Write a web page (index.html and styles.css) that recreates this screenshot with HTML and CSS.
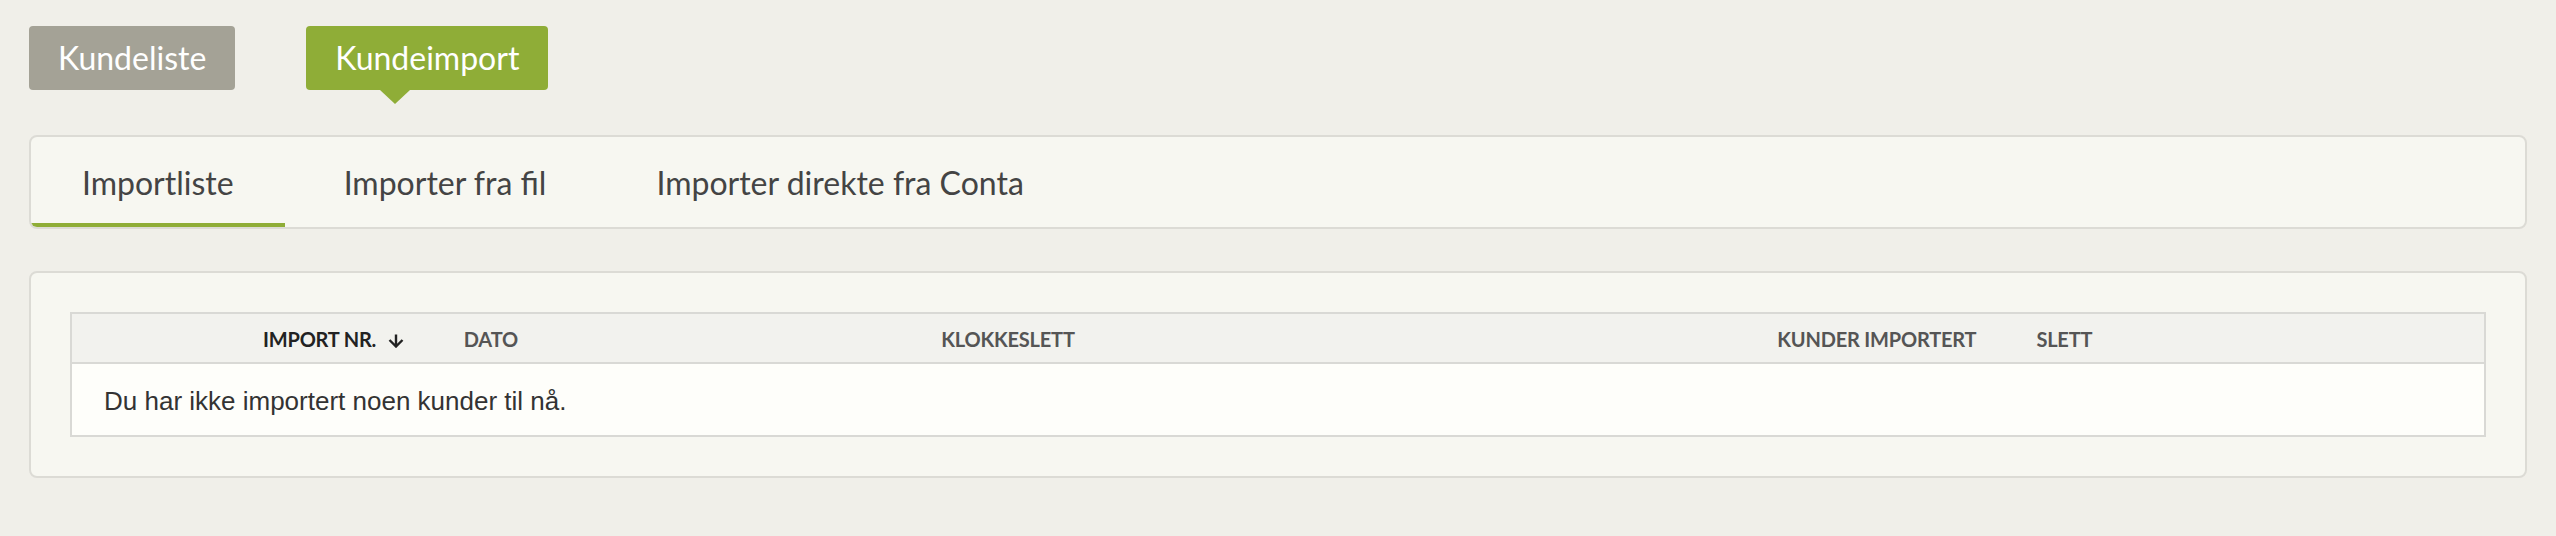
FILE: index.html
```html
<!DOCTYPE html>
<html lang="no">
<head>
    <meta charset="UTF-8">
    <meta name="viewport" content="width=device-width, initial-scale=1.0">
    <title>Kundeimport</title>
    <link rel="stylesheet" href="styles.css">
</head>
<body>
    <div class="page">
        <nav class="main-nav">
            <a class="nav-btn" href="#">Kundeliste</a>
            <a class="nav-btn active" href="#">Kundeimport</a>
        </nav>

        <div class="card tabs">
            <a class="tab active" href="#">Importliste</a>
            <a class="tab" href="#">Importer fra fil</a>
            <a class="tab" href="#">Importer direkte fra Conta</a>
        </div>

        <div class="card list-card">
            <table class="import-table">
                <colgroup>
                    <col class="col-nr">
                    <col class="col-date">
                    <col class="col-time">
                    <col class="col-count">
                    <col class="col-delete">
                </colgroup>
                <thead>
                    <tr>
                        <th class="num sorted">
                            Import nr.
                            <svg class="sort-icon" width="16" height="14" viewBox="0 0 16 14">
                                <path d="M8 0.5 V12.5 M1.5 6 L8 12.5 L14.5 6" fill="none" stroke="currentColor" stroke-width="2.4"/>
                            </svg>
                        </th>
                        <th>Dato</th>
                        <th>Klokkeslett</th>
                        <th class="num">Kunder importert</th>
                        <th>Slett</th>
                    </tr>
                </thead>
                <tbody>
                    <tr>
                        <td colspan="5" class="empty">Du har ikke importert noen kunder til nå.</td>
                    </tr>
                </tbody>
            </table>
        </div>
    </div>
</body>
</html>
```

FILE: styles.css
```css
* {
    margin: 0;
    padding: 0;
    box-sizing: border-box;
}

body {
    background: #f0efe9;
    font-family: Lato, "Open Sans", sans-serif;
    color: #444;
}

a {
    text-decoration: none;
}

.page {
    padding: 26px 29px;
}

/* top buttons */
.main-nav {
    display: flex;
    gap: 71px;
    margin-bottom: 45px;
}

.nav-btn {
    position: relative;
    height: 64px;
    padding: 0 29px;
    line-height: 64px;
    font-size: 32px;
    color: #fff;
    background: #a4a296;
    border-radius: 4px;
}

.nav-btn.active {
    background: #8fad37;
}

.nav-btn.active::after {
    content: "";
    position: absolute;
    top: 100%;
    left: 74px;
    border-left: 15px solid transparent;
    border-right: 15px solid transparent;
    border-top: 14px solid #8fad37;
}

/* cards */
.card {
    background: #f7f7f1;
    border: 2px solid #dcdbd5;
    border-radius: 8px;
}

.tabs {
    display: flex;
    gap: 8px;
    overflow: hidden;
}

.tab {
    display: flex;
    align-items: center;
    height: 90px;
    padding: 0 51px;
    border-top: 4px solid transparent;
    border-bottom: 4px solid transparent;
    font-size: 32px;
    color: #444;
}

.tab.active {
    border-bottom-color: #8fad37;
}

.list-card {
    margin-top: 42px;
    padding: 39px;
}

/* table */
.import-table {
    width: 100%;
    table-layout: fixed;
    border-collapse: separate;
    border-spacing: 0;
    border: 2px solid #d9d9d5;
}

.col-nr { width: 15%; }
.col-date { width: 19.8%; }
.col-time { width: 20%; }
.col-count { width: 25.4%; }
.col-delete { width: 19.8%; }

.import-table th {
    height: 50px;
    padding: 2px 30px 0;
    background: #f2f2ee;
    border-bottom: 2px solid #d9d9d5;
    font-size: 20px;
    font-weight: 700;
    letter-spacing: -0.2px;
    text-transform: uppercase;
    text-align: left;
    color: #555;
    white-space: nowrap;
}

.import-table th.num {
    text-align: right;
}

.import-table th.sorted {
    color: #222;
}

.sort-icon {
    margin-left: 7px;
    vertical-align: -1px;
}

.import-table td {
    height: 71px;
    padding: 3px 32px 0;
    background: #fefefa;
    font-family: "Liberation Sans", Arial, sans-serif;
    font-size: 26px;
    color: #333;
}
```
